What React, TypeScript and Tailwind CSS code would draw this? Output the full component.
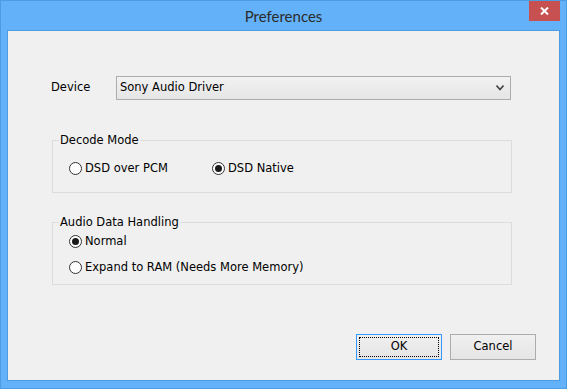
import React from "react";

const FONT = "font-['DejaVu_Sans',sans-serif]";

const Radio = ({ checked, label }: { checked?: boolean; label: string }) => (
  <label className="flex items-center gap-[3px] text-[11.5px] leading-[14px] text-black">
    <span className="w-[13px] h-[13px] rounded-full border border-[#333] bg-white flex items-center justify-center">
      {checked && <span className="w-[7px] h-[7px] rounded-full bg-[#1a1a1a]" />}
    </span>
    <span>{label}</span>
  </label>
);

const GroupBox = ({ title, className, children }: { title: string; className?: string; children: React.ReactNode }) => (
  <fieldset className={`border border-[#dcdcdc] mx-0 px-0 ${className ?? ""}`}>
    <legend className="ml-[6px] px-[1px] text-[11.5px] leading-[14px] text-black">{title}</legend>
    {children}
  </fieldset>
);

export default function App() {
  return (
    <div className={`w-[567px] h-[389px] bg-[#63b1f9] border border-[#4d9be0] flex flex-col ${FONT}`}>
      {/* Title bar */}
      <div className="h-[29px] relative flex items-center justify-center">
        <span className="font-['Lato',sans-serif] text-[15px] text-[#2b2b2b] mt-[2px]">Preferences</span>
        <button className="absolute right-[6px] top-0 w-[31px] h-[20px] bg-[#c75050] flex items-center justify-center">
          <svg width="9" height="8" viewBox="0 0 9 8">
            <path d="M1 0.5 L8 7.5 M8 0.5 L1 7.5" stroke="white" strokeWidth="2" />
          </svg>
        </button>
      </div>

      {/* Client area */}
      <div className="mx-[6px] flex-1 mb-[7px] bg-[#f0f0f0] border border-[#4d9be0] flex flex-col pl-[43px] pr-[48px]">
        <div className="flex items-center mt-[45px]">
          <span className="w-[65px] text-[11.5px] text-black">Device</span>
          <div className="flex-1 h-[24px] border border-[#acacac] bg-gradient-to-b from-[#f2f2f2] to-[#e5e5e5] flex items-center justify-between pl-[3px] pr-[6px]">
            <span className="text-[11.5px] text-black">Sony Audio Driver</span>
            <svg width="8" height="6" viewBox="0 0 8 6">
              <path d="M0.5 0.5 L4 4.5 L7.5 0.5" stroke="#444" strokeWidth="1.6" fill="none" />
            </svg>
          </div>
        </div>

        <GroupBox title="Decode Mode" className="mt-[33px] h-[60px] ml-[1px] -mr-[1px]">
          <div className="flex pl-[16px] pt-[14px]">
            <div className="w-[143px]">
              <Radio label="DSD over PCM" />
            </div>
            <Radio checked label="DSD Native" />
          </div>
        </GroupBox>

        <GroupBox title="Audio Data Handling" className="mt-[22px] h-[70px] ml-[1px] -mr-[1px]">
          <div className="flex flex-col gap-[12px] pl-[16px] pt-[5px]">
            <Radio checked label="Normal" />
            <Radio label="Expand to RAM (Needs More Memory)" />
          </div>
        </GroupBox>

        <div className="flex justify-end gap-[8px] mt-auto mb-[20px] -mr-[25px]">
          <button className="w-[86px] h-[26px] border border-[#3399ff] bg-gradient-to-b from-[#f0f0f0] to-[#e5e5e5] p-[2px]">
            <span className="w-full h-full border border-dotted border-black flex items-center justify-center text-[11.5px] text-black">
              OK
            </span>
          </button>
          <button className="w-[86px] h-[26px] border border-[#acacac] bg-gradient-to-b from-[#f0f0f0] to-[#e5e5e5] flex items-center justify-center text-[11.5px] text-black">
            Cancel
          </button>
        </div>
      </div>
    </div>
  );
}
